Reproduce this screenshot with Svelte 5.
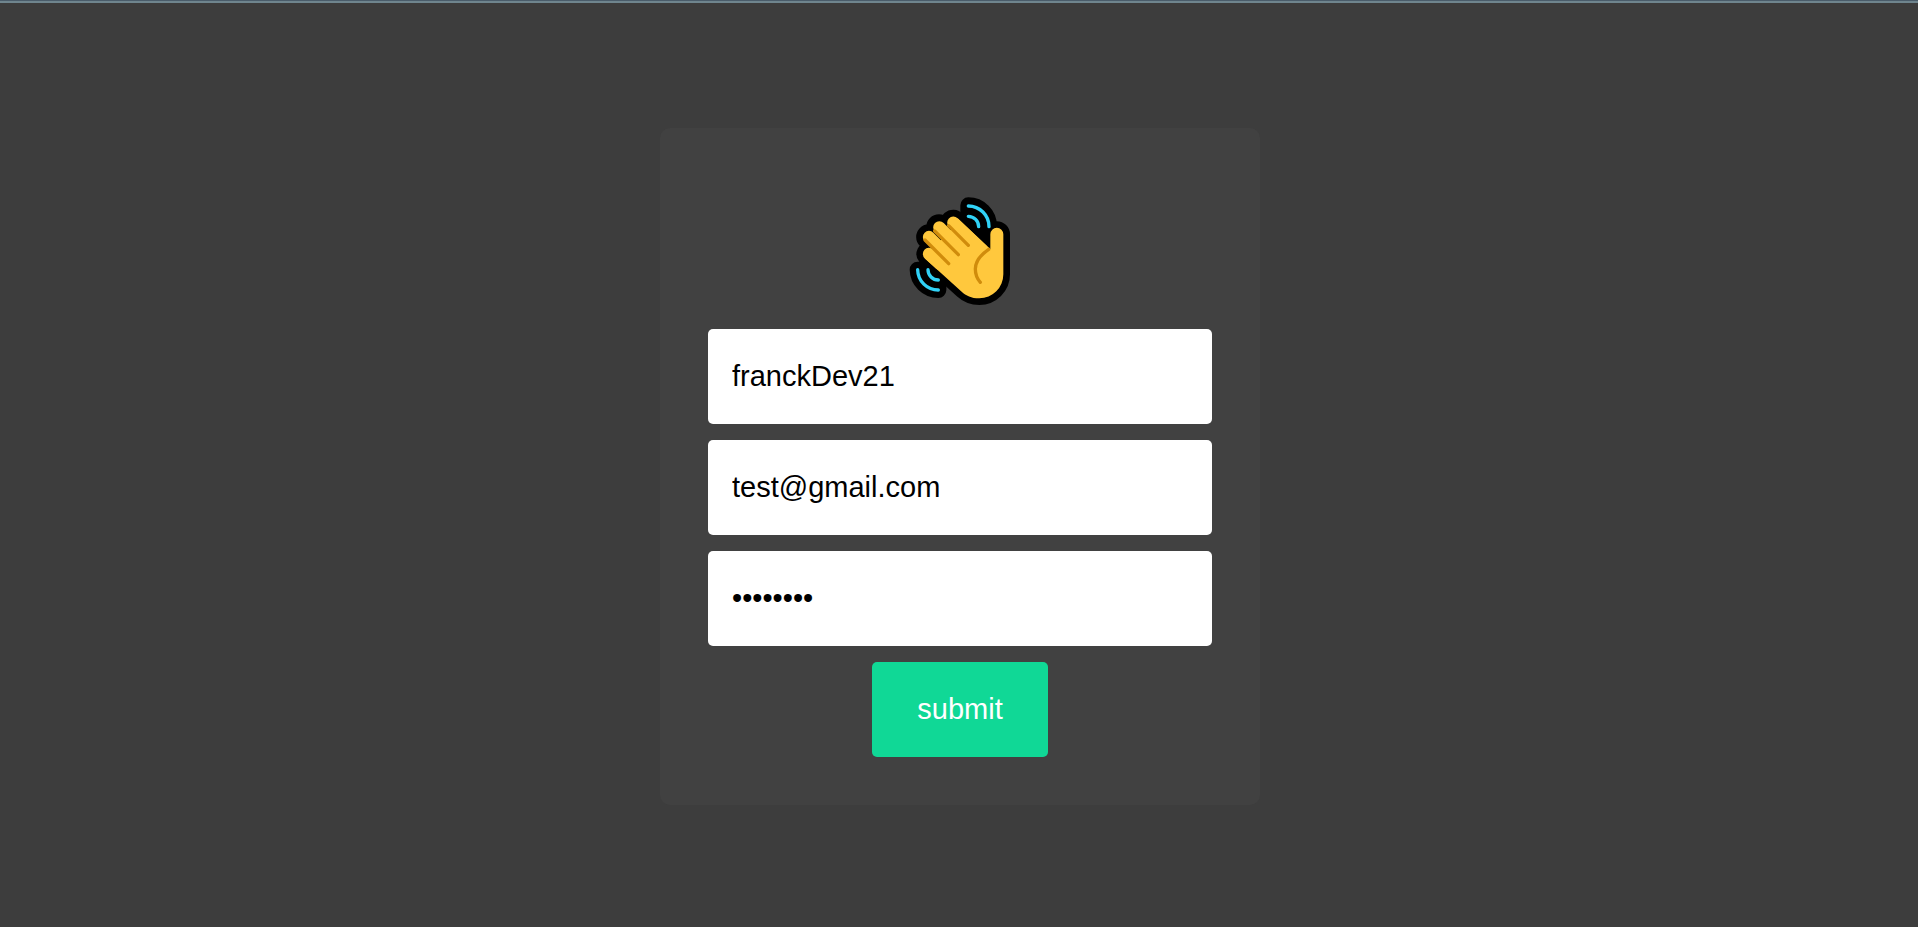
<script>
  let username = $state('franckDev21');
  let email = $state('test@gmail.com');
  let password = $state('password');
</script>

<svelte:head>
  <title>Sign up</title>
</svelte:head>

<main>
  <form onsubmit={(event) => event.preventDefault()}>
    <svg class="wave" viewBox="0 -27 360 459" role="img" aria-label="Waving hand">
      <!-- dark outline around the hand and motion lines -->
      <g fill="#000" stroke="#000" stroke-linecap="round" stroke-linejoin="round">
        <path stroke-width="48" d="M205 61A62 62 0 0 1 267 123L236 124L205 93Z" />
        <path stroke-width="48" d="M53 254A62 62 0 0 0 115 315L116 285L84 254Z" />
        <path stroke-width="40" d="M174 100L271 192V148A19 19 0 0 1 310 148V268A72 72 0 0 1 238 340C214 340 198 332 185 320L74 219A18 18 0 0 1 88 189L96 190L74 169A18 18 0 0 1 99 143L106 146L104 139A18 18 0 0 1 130 113L149 126L146 126A19 19 0 0 1 174 100Z" />
      </g>
      <!-- fingers, palm and thumb -->
      <g fill="none" stroke="#ffc83d" stroke-linecap="round" stroke-width="37">
        <path d="M160 113L246 195M118 127L210 219M87 156L190 259M87 207L120 237" />
      </g>
      <path fill="#ffc83d" d="M160 133L173 100L271 192V148A19 19 0 0 1 310 148V268A72 72 0 0 1 238 340C214 340 198 332 185 320L74 220L104 207L108 185L84 165L120 168L134 154L122 140Z" />
      <g fill="none" stroke="#d08c0c" stroke-linecap="round" stroke-width="10">
        <path d="M146 122L205 181M104 138L175 209M75 165L146 236" />
        <path d="M266 193C240 211 226 228 226 252C226 269 232 282 241 292" />
      </g>
      <g fill="none" stroke="#31d2f7" stroke-linecap="round" stroke-width="10">
        <path d="M205 63A62 62 0 0 1 267 125M205 94A31 31 0 0 1 236 125" />
        <path d="M53 254A62 62 0 0 0 115 315M84 254A31 31 0 0 0 115 285" />
      </g>
    </svg>

    <input type="text" aria-label="Username" autocomplete="off" spellcheck="false" bind:value={username} />
    <input type="email" aria-label="Email" autocomplete="off" spellcheck="false" bind:value={email} />
    <input type="password" aria-label="Password" autocomplete="off" bind:value={password} />
    <button type="submit">submit</button>
  </form>
</main>

<style>
  :global(body) {
    background: #3d3d3d;
  }

  main {
    box-sizing: border-box;
    display: flex;
    align-items: center;
    justify-content: center;
    min-height: 100vh;
    padding: 6px 16px 0 18px;
    background: linear-gradient(#4a5c6a 0 1px, #6f858e 1px 3px, transparent 3px);
    font-family: Arial, "Liberation Sans", sans-serif;
  }

  form {
    box-sizing: border-box;
    display: flex;
    flex-direction: column;
    align-items: center;
    gap: 16px;
    width: 100%;
    max-width: 600px;
    padding: 48px;
    border-radius: 10px;
    background: #414141;
  }

  .wave {
    width: 120px;
    margin-bottom: -16px;
  }

  input,
  button {
    box-sizing: border-box;
    border: 0;
    border-radius: 5px;
    font: inherit;
    font-size: 29px;
    line-height: 33px;
  }

  input {
    width: 100%;
    padding: 31px 24px;
    background: #fff;
    color: #000;
  }

  input:focus {
    outline: 2px solid #10d896;
  }

  button {
    min-width: 176px;
    padding: 31px 40px;
    background: #10d896;
    color: #fff;
    cursor: pointer;
  }
</style>
